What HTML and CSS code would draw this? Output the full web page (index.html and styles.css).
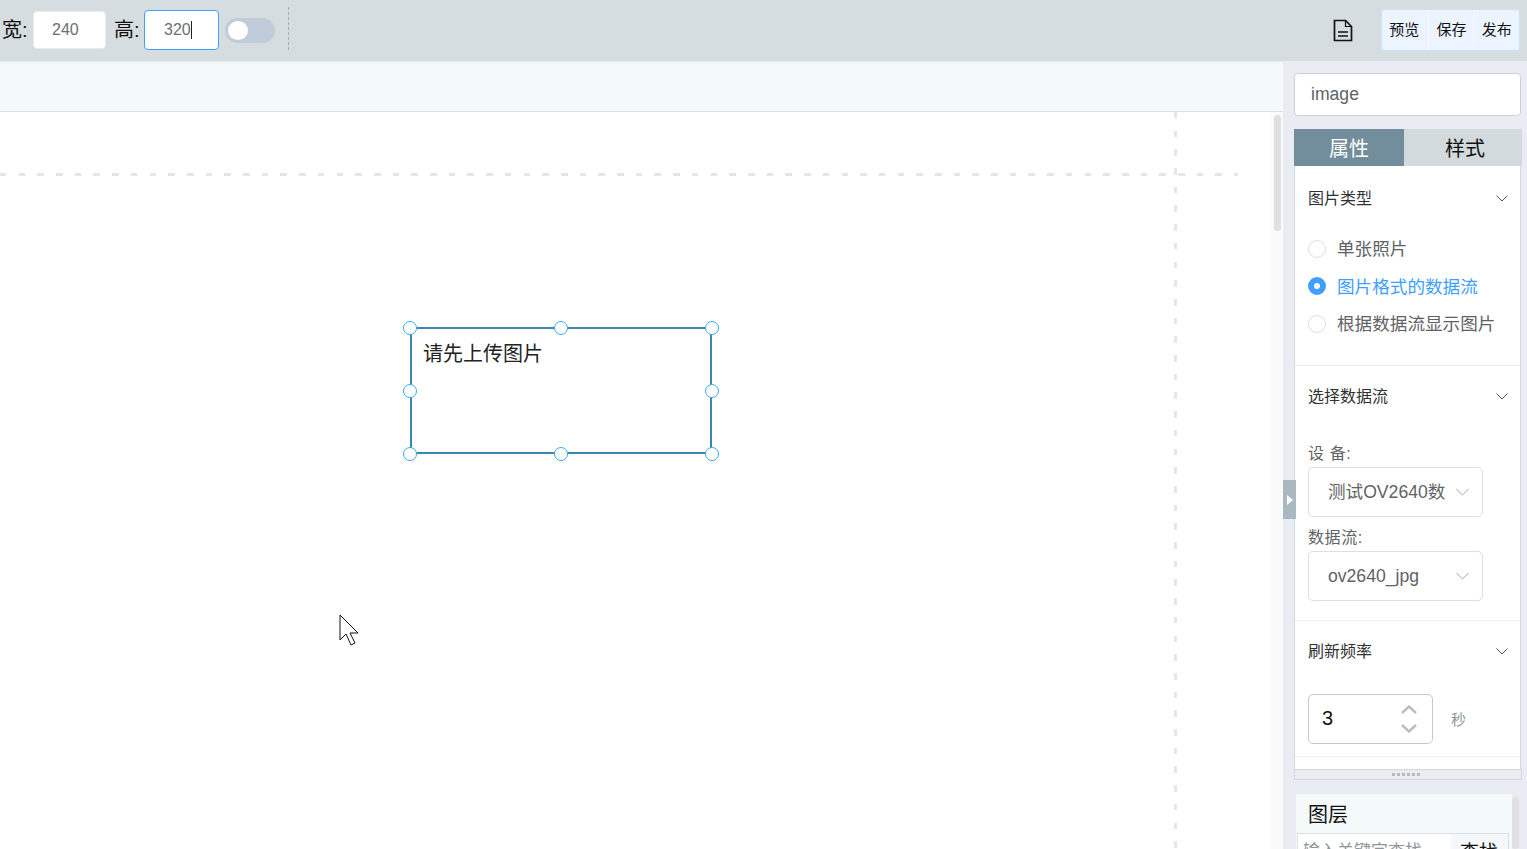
FILE: index.html
```html
<!DOCTYPE html>
<html lang="zh">
<head>
<meta charset="utf-8">
<title>编辑器</title>
<link rel="stylesheet" href="styles.css">
</head>
<body>
<div class="app">
  <header class="toolbar">
    <div class="size-group">
      <span class="size-label">宽:</span>
      <div class="size-input">240</div>
      <span class="size-label second">高:</span>
      <div class="size-input focused">320<i class="caret"></i></div>
      <div class="switch"><i class="knob"></i></div>
      <i class="tool-sep"></i>
    </div>
    <div class="tool-right">
      <svg class="doc-icon" width="20" height="23" viewBox="0 0 20 23" fill="none" stroke="#111" stroke-width="1.700"><path d="M1.500 1.500h11l6 6v14h-17z"/><path d="M12.500 1.500v6h6" stroke-width="1.200"/><path d="M5 13h10M5 17h10"/></svg>
      <div class="btn-group">
        <span class="tool-btn">预览</span>
        <span class="tool-btn">保存</span>
        <span class="tool-btn">发布</span>
      </div>
    </div>
  </header>
  <div class="main">
    <div class="work">
      <div class="ruler"></div>
      <div class="canvas-row">
        <div class="canvas">
          <i class="guide-h"></i>
          <i class="guide-v"></i>
          <div class="widget">
            <span class="widget-text">请先上传图片</span>
            <i class="handle h-tl"></i><i class="handle h-tc"></i><i class="handle h-tr"></i>
            <i class="handle h-ml"></i><i class="handle h-mr"></i>
            <i class="handle h-bl"></i><i class="handle h-bc"></i><i class="handle h-br"></i>
          </div>
          <svg class="pointer" width="20" height="32" viewBox="0 0 20 32" fill="#fff" stroke="#111" stroke-width="1"><path d="M1 1v25l6-6 5 11 4-2-5-10h8z"/></svg>
        </div>
        <div class="vscroll"><i class="vthumb"></i></div>
      </div>
    </div>
    <aside class="side">
      <div class="collapse"><i class="collapse-arrow"></i></div>
      <div class="name-input">image</div>
      <div class="tabs">
        <span class="tab active">属性</span>
        <span class="tab">样式</span>
      </div>
      <div class="props">
        <section class="group group-type">
          <div class="group-head">
            <span>图片类型</span>
            <svg class="chev" width="12" height="7" viewBox="0 0 12 7" fill="none" stroke="#4a5560"><path d="M.5.500 6 6 11.500.500"/></svg>
          </div>
          <div class="radios">
            <label class="radio"><i class="dot"></i>单张照片</label>
            <label class="radio on"><i class="dot"></i>图片格式的数据流</label>
            <label class="radio"><i class="dot"></i>根据数据流显示图片</label>
          </div>
        </section>
        <section class="group group-stream">
          <div class="group-head">
            <span>选择数据流</span>
            <svg class="chev" width="12" height="7" viewBox="0 0 12 7" fill="none" stroke="#4a5560"><path d="M.5.500 6 6 11.500.500"/></svg>
          </div>
          <div class="field-label first">设 备:</div>
          <div class="select"><span class="select-cjk">测试OV2640数</span><svg width="13" height="8" viewBox="0 0 13 8" fill="none" stroke="#c4cad3" stroke-width="1.200"><path d="M.5 1 6.500 7l6-6"/></svg></div>
          <div class="field-label">数据流:</div>
          <div class="select"><span>ov2640_jpg</span><svg width="13" height="8" viewBox="0 0 13 8" fill="none" stroke="#c4cad3" stroke-width="1.200"><path d="M.5 1 6.500 7l6-6"/></svg></div>
        </section>
        <section class="group group-rate">
          <div class="group-head">
            <span>刷新频率</span>
            <svg class="chev" width="12" height="7" viewBox="0 0 12 7" fill="none" stroke="#4a5560"><path d="M.5.500 6 6 11.500.500"/></svg>
          </div>
          <div class="rate-row">
            <div class="number">
              <span class="number-value">3</span>
              <div class="stepper">
                <svg width="16" height="9" viewBox="0 0 16 9" fill="none" stroke="#b4bfc6" stroke-width="2.400"><path d="M1 8l7-6.500 7 6.500"/></svg>
                <svg width="16" height="9" viewBox="0 0 16 9" fill="none" stroke="#b4bfc6" stroke-width="2.400"><path d="M1 1l7 6.500 7-6.500"/></svg>
              </div>
            </div>
            <span class="unit">秒</span>
          </div>
        </section>
      </div>
      <div class="resizer"><i class="grip"></i></div>
      <div class="layers">
        <div class="layers-body">
          <div class="layers-title">图层</div>
          <div class="search">
            <span class="search-text">输入关键字查找</span>
            <span class="search-btn">查找</span>
          </div>
        </div>
        <i class="layers-thumb"></i>
      </div>
    </aside>
  </div>
</div>
</body>
</html>
```
FILE: styles.css
```css
* { box-sizing: border-box; }
html, body { margin: 0; height: 100%; overflow: hidden; }
body { font-family: "Liberation Sans", "Noto Sans CJK SC", sans-serif; color: #111; background: #fff; }
i { display: block; font-style: normal; }
.app { display: flex; flex-direction: column; height: 849px; }

.toolbar { flex: 0 0 61px; display: flex; justify-content: space-between; align-items: center; background: #d6dde0; padding: 0 7px 0 2px; }
.size-group { display: flex; align-items: center; }
.size-label { font-size: 20px; line-height: 24px; width: 31px; margin-bottom: 2px; color: #111; }
.size-label.second { width: 30px; margin-left: 8px; }
.size-input { width: 73px; height: 38px; margin-bottom: 1px; background: #fff; border: 1px solid #e8ecef; border-radius: 4px; color: #6c7075; font-size: 16px; display: flex; align-items: center; padding-left: 18px; }
.size-input.focused { border-color: #409eff; width: 75px; height: 40px; padding-left: 19px; }
.caret { width: 1px; height: 18px; background: #222; }
.switch { width: 50px; height: 25px; border-radius: 13px; background: #c0ccda; margin-left: 6px; padding: 3px; }
.knob { width: 20px; height: 19px; border-radius: 50%; background: #fff; }
.tool-sep { width: 0; height: 43px; border-left: 1px dashed #a7aeb3; margin-left: 13px; margin-bottom: 4px; }
.tool-right { display: flex; align-items: center; }
.doc-icon { margin-right: 28px; margin-bottom: 1px; }
.btn-group { display: flex; width: 139px; height: 42px; border: 1px solid #c6e2ff; border-radius: 3px; background: #ecf5ff; margin-bottom: 1px; }
.tool-btn { flex: 1; font-size: 15px; display: flex; align-items: center; justify-content: center; color: #111; border-left: 1px solid #f5faff; padding-bottom: 3px; }
.tool-btn:first-child { border-left: 0; padding-right: 2px; }

.main { flex: 1; display: flex; min-height: 0; }
.work { flex: 0 0 1283px; display: flex; flex-direction: column; border-top: 1px solid #e6eaee; }
.ruler { flex: 0 0 50px; background: #f4f9f9; border-bottom: 1px solid #d9dfe3; }
.canvas-row { flex: 1; display: flex; min-height: 0; }
.canvas { flex: 1; position: relative; background: #fff; overflow: hidden; }
.guide-h { position: absolute; left: 0; top: 61px; width: 1238px; height: 3px; background: repeating-linear-gradient(90deg, #e6e6e6 0 6.500px, transparent 6.500px 18.700px); }
.guide-v { position: absolute; left: 1174px; top: 0; width: 3px; height: 740px; background: repeating-linear-gradient(180deg, #e6e6e6 0 6.500px, transparent 6.500px 18.700px); }
.widget { position: absolute; left: 410px; top: 215px; width: 302px; height: 127px; border: 2px solid #3f85a8; }
.widget-text { position: absolute; left: 11px; top: 12px; font-size: 20px; line-height: 26px; color: #222; }
.handle { position: absolute; width: 14px; height: 14px; border-radius: 50%; background: #fff; border: 1.500px solid #3ba9f2; }
.h-tl { left: -9px; top: -8px; }
.h-tc { left: 142px; top: -8px; }
.h-tr { right: -9px; top: -8px; }
.h-ml { left: -9px; top: 55px; }
.h-mr { right: -9px; top: 55px; }
.h-bl { left: -9px; bottom: -9px; }
.h-bc { left: 142px; bottom: -9px; }
.h-br { right: -9px; bottom: -9px; }
.pointer { position: absolute; left: 339px; top: 502px; }
.vscroll { flex: 0 0 13px; background: #fafafa; padding: 3px 2px 0 4px; }
.vthumb { height: 116px; border-radius: 4px; background: #e0e0e0; }

.side { flex: 1; position: relative; background: #e9edf3; padding: 12px 5px 0 11px; display: flex; flex-direction: column; min-width: 0; }
.collapse { position: absolute; left: 0; top: 419px; width: 13px; height: 39px; background: #aab8c0; display: flex; align-items: center; justify-content: center; }
.collapse-arrow { width: 0; height: 0; border-left: 6px solid #fff; border-top: 5px solid transparent; border-bottom: 5px solid transparent; }
.name-input { height: 43px; width: 227px; background: #fff; border: 1px solid #ccd0d4; border-radius: 4px; padding-left: 16px; font-size: 17.600px; line-height: 41px; color: #606266; }
.tabs { display: flex; margin-top: 13px; height: 37px; width: 228px; }
.tab { font-size: 20px; display: flex; align-items: center; justify-content: center; background: #d3dadd; color: #111; width: 118px; padding-left: 4px; }
.tab.active { width: 110px; background: #728d9b; color: #fff; padding: 0; }
.props { height: 603px; width: 227px; background: #fff; border-left: 1px solid #d3d9e0; border-right: 1px solid #d3d9e0; overflow: hidden; }
.group { border-bottom: 1px solid #e9ecef; padding: 0 12px 0 13px; }
.group-type { height: 200px; }
.group-stream { height: 255px; }
.group-rate { height: 136px; }
.group-head { height: 60px; display: flex; align-items: center; justify-content: space-between; font-size: 16px; line-height: 22px; color: #303133; }
.group-head span { margin-top: 2px; }
.group-type .group-head { height: 64px; }
.radios { display: flex; flex-direction: column; margin-top: -1px; }
.radio { height: 37.500px; display: flex; align-items: center; font-size: 17.600px; color: #606266; }
.radio .dot { width: 18px; height: 18px; border-radius: 50%; border: 1px solid #dcdfe6; background: #fff; margin: 2px 11px 0 0; }
.radio.on { color: #409eff; }
.radio.on .dot { border: 6px solid #409eff; }
.field-label { font-size: 16px; line-height: 20px; color: #606266; padding-top: 1px; letter-spacing: .6px; }
.field-label.first { margin-top: 17px; }
.select { width: 175px; height: 50px; margin: 3px 0 10px; border: 1px solid #dcdfe6; border-radius: 5px; padding: 0 13px 0 19px; display: flex; align-items: center; justify-content: space-between; font-size: 17.600px; color: #606266; }
.select-cjk { margin-top: -3px; }
.rate-row { display: flex; align-items: center; margin-top: 13px; }
.number { width: 125px; height: 50px; border: 1px solid #c6cace; border-radius: 5px; padding: 0 14px 0 13px; display: flex; align-items: center; justify-content: space-between; font-size: 20px; color: #111; }
.number-value { margin-top: -2px; }
.stepper { display: flex; flex-direction: column; gap: 10px; margin-right: 1px; }
.stepper svg { display: block; }
.unit { font-size: 15px; color: #8a97a3; margin: -2px 0 0 18px; }
.resizer { height: 11px; width: 228px; background: #e9edf0; border: 1px solid #d3d9e0; display: flex; align-items: center; justify-content: center; }
.grip { width: 28px; height: 3px; margin-right: 4px; background: repeating-linear-gradient(90deg, #b4bcc2 0 3px, transparent 3px 5px); }
.layers { margin-top: 14px; margin-left: 2px; display: flex; flex: 1; min-height: 0; overflow: hidden; }
.layers-body { width: 216px; background: #f4f9f9; }
.layers-title { height: 39px; font-size: 20px; line-height: 42px; padding-left: 12px; color: #111; }
.search { display: flex; height: 40px; border: 1px solid #d9dfe3; margin-left: 1px; width: 212px; background: #fff; }
.search-text { flex: 1; font-size: 17px; color: #8f9499; padding: 3px 0 0 5px; }
.search-btn { width: 57px; background: #f5f7fa; font-size: 19px; padding: 3px 0 0 9px; color: #111; }
.layers-thumb { width: 7px; background: #e0e0e0; border-radius: 4px; margin-top: 3px; }
```
